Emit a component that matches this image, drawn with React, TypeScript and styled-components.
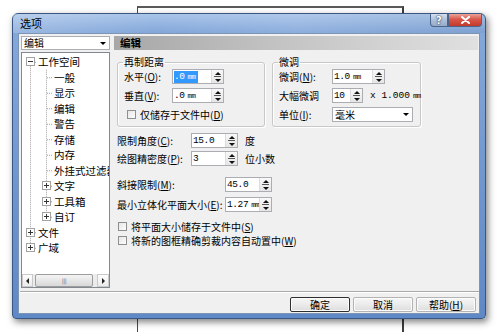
import React from 'react';
import styled, { createGlobalStyle } from 'styled-components';

type TreeItem = {
  label: string;
  root?: boolean;
  box?: 'plus' | 'minus';
};

const GlobalStyle = createGlobalStyle`
  html, body {
    margin: 0;
    padding: 0;
    background: #fff;
  }
  body {
    font-family: "Noto Sans CJK SC", "Noto Sans", sans-serif;
  }
`;

const Desktop = styled.div`
  background: #fff;
  height: 332px;
  overflow: hidden;
  position: relative;
  width: 500px;
`;

// the window lying behind the dialog
const BackWindow = styled.div`
  border-left: 1px solid #4a4a4a;
  border-right: 2px solid #3d3d3d;
  border-top: 2px solid #5a5a5a;
  box-sizing: border-box;
  height: 360px;
  left: 137px;
  position: absolute;
  top: 6px;
  width: 267px;
`;

const Dialog = styled.div`
  background: linear-gradient(180deg, #a9c4e9 0px, #84a8da 18px, #6f96cf 55%, #5f88c6 100%);
  border: 1px solid #3a5783;
  border-radius: 6px 6px 4px 4px;
  box-shadow: 2px 3px 7px rgba(0, 0, 0, 0.5);
  box-sizing: border-box;
  display: flex;
  flex-direction: column;
  height: 306px;
  left: 12px;
  position: absolute;
  top: 13px;
  width: 474px;
`;

const TitleBar = styled.div`
  align-items: center;
  background: linear-gradient(90deg, rgba(255, 255, 255, 0.18), rgba(255, 255, 255, 0) 30%, rgba(255, 255, 255, 0.08) 60%, rgba(0, 0, 0, 0.04));
  display: flex;
  flex-shrink: 0;
  height: 19px;
  padding: 0 3px 0 7px;
`;

const Title = styled.span`
  color: #000;
  flex: 1;
  font-size: 11px;
  line-height: 19px;
`;

const CaptionButtons = styled.div`
  align-self: flex-start;
  display: flex;
`;

const CaptionButton = styled.div<{ $close?: boolean }>`
  align-items: center;
  background: ${(p) =>
    p.$close
      ? 'linear-gradient(180deg, #eba397 0%, #d8574a 45%, #c23a29 100%)'
      : 'linear-gradient(180deg, #d6e0ee 0%, #adbfd9 50%, #97acca 100%)'};
  border: 1px solid #4b648a;
  border-radius: ${(p) => (p.$close ? '0 0 4px 0' : '0 0 0 4px')};
  border-top: none;
  box-sizing: border-box;
  color: #fff;
  display: flex;
  font-family: "DejaVu Sans", sans-serif;
  font-size: 10px;
  font-weight: bold;
  height: 13px;
  justify-content: center;
  text-shadow: 0 0 2px #233a5c, 0 0 1px #233a5c;
  width: ${(p) => (p.$close ? 34 : 18)}px;
`;

const Client = styled.div`
  background: #f0f0f0;
  border: 1px solid #7d94b5;
  color: #000;
  display: flex;
  flex: 1;
  flex-direction: column;
  font-size: 10px;
  margin: 0 5px 4px;
`;

const Main = styled.div`
  box-sizing: border-box;
  display: flex;
  gap: 4px;
  height: 254px;
  padding: 2px 1px 0 2px;
`;

const Sidebar = styled.div`
  display: flex;
  flex-direction: column;
  flex-shrink: 0;
  gap: 2px;
  width: 89px;
`;

const Combo = styled.div<{ $w: number }>`
  align-items: center;
  background: #fff;
  border: 1px solid #abadb3;
  box-sizing: border-box;
  display: flex;
  flex-shrink: 0;
  height: ${(p) => (p.$w > 85 ? 14 : 15)}px;
  width: ${(p) => p.$w}px;
`;

const ComboText = styled.span`
  flex: 1;
  line-height: 12px;
  padding-left: 2px;
`;

const ComboArrow = styled.span`
  align-items: center;
  display: flex;
  height: 100%;
  justify-content: center;
  width: 12px;

  &::after {
    border-left: 3px solid transparent;
    border-right: 3px solid transparent;
    border-top: 3px solid #000;
    content: '';
  }
`;

const Tree = styled.div`
  background: #fff;
  border: 1px solid #828790;
  box-sizing: border-box;
  display: flex;
  flex-direction: column;
  height: 236px;
  overflow: hidden;
`;

const TreeList = styled.div`
  flex: 1;
  overflow: hidden;
  padding-top: 1px;
  position: relative;
`;

const TreeLines = styled.svg`
  left: 0;
  position: absolute;
  top: 0;
`;

const TreeRow = styled.div<{ $indent: number }>`
  align-items: center;
  display: flex;
  font-size: 10.5px;
  height: 15.5px;
  padding-left: ${(p) => p.$indent}px;
  position: relative;
  white-space: nowrap;
`;

const ExpandBox = styled.span<{ $open?: boolean }>`
  background: #fff;
  border: 1px solid #a3a3a3;
  box-sizing: border-box;
  flex-shrink: 0;
  height: 9px;
  margin-right: 3px;
  position: relative;
  width: 9px;

  &::before {
    background: #333;
    content: '';
    height: 1px;
    left: 1px;
    position: absolute;
    top: 3px;
    width: 5px;
  }

  &::after {
    background: #333;
    content: '';
    display: ${(p) => (p.$open ? 'none' : 'block')};
    height: 5px;
    left: 3px;
    position: absolute;
    top: 1px;
    width: 1px;
  }
`;

const HScroll = styled.div`
  background: #ececec;
  display: flex;
  flex-shrink: 0;
  height: 13px;
`;

const ScrollArrow = styled.div<{ $dir: 'left' | 'right'; $w: number }>`
  align-items: center;
  background: linear-gradient(180deg, #fdfdfd, #ebebeb);
  border: 1px solid #c9c9c9;
  box-sizing: border-box;
  display: flex;
  justify-content: center;
  width: ${(p) => p.$w}px;

  &::after {
    border-bottom: 3px solid transparent;
    border-top: 3px solid transparent;
    ${(p) => (p.$dir === 'left' ? 'border-right: 3px solid #222;' : 'border-left: 3px solid #222;')}
    content: '';
  }
`;

const ScrollTrack = styled.div`
  align-items: stretch;
  display: flex;
  flex: 1;
  padding: 0 2px;
`;

const ScrollThumb = styled.div`
  align-items: center;
  background: linear-gradient(180deg, #f4f4f4, #d9d9d9);
  border: 1px solid #9d9d9d;
  border-radius: 2px;
  box-sizing: border-box;
  color: #777;
  display: flex;
  font-family: "DejaVu Sans", sans-serif;
  font-size: 6px;
  justify-content: center;
  letter-spacing: -0.5px;
  width: 58px;
`;

const Panel = styled.div`
  display: flex;
  flex: 1;
  flex-direction: column;
`;

const PanelHeader = styled.div`
  background: linear-gradient(90deg, #a7a7a7 0%, #c3c3c3 45%, #e0e0e0 100%);
  font-size: 10.5px;
  font-weight: bold;
  height: 14px;
  line-height: 14px;
  padding-left: 6px;
`;

const PanelBody = styled.div`
  display: flex;
  flex-direction: column;
  padding-left: 3px;
`;

const GroupRow = styled.div`
  display: flex;
  gap: 7px;
  margin-top: 6px;
`;

const Group = styled.fieldset<{ $w: number }>`
  border: 1px solid #c8c8c8;
  border-radius: 3px;
  box-shadow: inset 1px 1px 0 #fff, 1px 1px 0 #fff;
  box-sizing: border-box;
  display: flex;
  flex-direction: column;
  gap: 4px;
  margin: 0;
  min-width: 0;
  padding: 1px 6px 4px;
  width: ${(p) => p.$w}px;
`;

const Legend = styled.legend`
  font-size: 10px;
  line-height: 12px;
  margin-left: -1px;
  padding: 0 1px;
`;

const Section = styled.div<{ $top: number; $gap: number }>`
  display: flex;
  flex-direction: column;
  gap: ${(p) => p.$gap}px;
  margin-top: ${(p) => p.$top}px;
`;

const Row = styled.div`
  align-items: center;
  display: flex;
  height: 15px;
`;

const Label = styled.span<{ $w: number }>`
  flex-shrink: 0;
  line-height: 15px;
  white-space: nowrap;
  width: ${(p) => p.$w}px;
`;

const Suffix = styled.span`
  font-family: "Liberation Mono", monospace;
  font-size: 9.5px;
  margin-left: 7px;
  white-space: nowrap;
`;

const SuffixCjk = styled.span`
  margin-left: 7px;
  white-space: nowrap;
`;

const SpinBox = styled.div<{ $w: number }>`
  background: #fff;
  border: 1px solid #abadb3;
  box-sizing: border-box;
  display: flex;
  flex-shrink: 0;
  height: 15px;
  width: ${(p) => p.$w}px;
`;

const SpinValue = styled.div`
  align-items: center;
  display: flex;
  flex: 1;
  font-family: "Liberation Mono", monospace;
  font-size: 9.5px;
  letter-spacing: -0.4px;
  min-width: 0;
  overflow: hidden;
  padding-left: 1px;
  white-space: nowrap;
`;

const Selected = styled.span`
  background: #3399ff;
  color: #fff;
  line-height: 11px;
  padding-right: 3px;
`;

const Unit = styled.span`
  font-size: 7.5px;
  letter-spacing: -0.6px;
  margin-left: 3px;
`;

const Spinner = styled.div`
  background: linear-gradient(180deg, #f8f8f8, #e6e6e6);
  border-left: 1px solid #dcdcdc;
  display: flex;
  flex-direction: column;
  flex-shrink: 0;
  width: 11px;
`;

const SpinHalf = styled.div<{ $up?: boolean }>`
  align-items: center;
  display: flex;
  flex: 1;
  justify-content: center;
  margin: 0 2px;
  ${(p) => (p.$up ? 'border-bottom: 1px solid #555;' : '')}

  &::after {
    border-left: 3px solid transparent;
    border-right: 3px solid transparent;
    ${(p) => (p.$up ? 'border-bottom: 3px solid #111;' : 'border-top: 3px solid #111;')}
    content: '';
  }
`;

const CheckRow = styled.label<{ $indent: number }>`
  align-items: center;
  display: flex;
  gap: 4px;
  height: 14px;
  padding-left: ${(p) => p.$indent}px;
  white-space: nowrap;
`;

const CheckBox = styled.span`
  background: linear-gradient(135deg, #e6e6e6, #fdfdfd);
  border: 1px solid #8f8f8f;
  box-sizing: border-box;
  flex-shrink: 0;
  height: 9px;
  width: 9px;
`;

const Separator = styled.div`
  border-bottom: 1px solid #fff;
  border-top: 1px solid #a9a9a9;
  margin: 3px 0 0 1px;
`;

const ButtonBar = styled.div`
  display: flex;
  gap: 3px;
  justify-content: flex-end;
  padding: 4px 3px 0 0;
`;

const Button = styled.div<{ $default?: boolean }>`
  align-items: center;
  background: linear-gradient(180deg, #f6f6f6 0%, #ebebeb 50%, #dddddd 100%);
  border: 1px solid ${(p) => (p.$default ? '#2f2f2f' : '#b3b3b3')};
  border-radius: 2px;
  box-shadow: inset 0 0 0 1px #fcfcfc;
  box-sizing: border-box;
  display: flex;
  height: 15px;
  justify-content: center;
  width: 60px;
`;

const treeItems: TreeItem[] = [
  { label: '工作空间', root: true, box: 'minus' },
  { label: '一般' },
  { label: '显示' },
  { label: '编辑' },
  { label: '警告' },
  { label: '存储' },
  { label: '内存' },
  { label: '外挂式过滤器' },
  { label: '文字', box: 'plus' },
  { label: '工具箱', box: 'plus' },
  { label: '自订', box: 'plus' },
  { label: '文件', root: true, box: 'plus' },
  { label: '广域', root: true, box: 'plus' },
];

const ROW_H = 15.5;
const rowCenter = (i: number) => 1 + ROW_H * i + ROW_H / 2;

const Spin = ({ w, children }: { w: number; children: React.ReactNode }) => (
  <SpinBox $w={w}>
    <SpinValue>{children}</SpinValue>
    <Spinner>
      <SpinHalf $up />
      <SpinHalf />
    </Spinner>
  </SpinBox>
);

const Check = ({ indent, children }: { indent: number; children: React.ReactNode }) => (
  <CheckRow $indent={indent}>
    <CheckBox />
    <span>{children}</span>
  </CheckRow>
);

const WorkspaceTree = () => {
  const dot = { stroke: '#a3a3a3', strokeWidth: 1, strokeDasharray: '1 1' };
  return (
    <Tree>
      <TreeList>
        <TreeLines width="87" height="222">
          <line x1="8.5" y1={rowCenter(0)} x2="8.5" y2={rowCenter(12)} {...dot} />
          <line x1="24.5" y1={rowCenter(0) + 8} x2="24.5" y2={rowCenter(10)} {...dot} />
          {treeItems.map((item, i) =>
            item.root ? (
              <line key={i} x1="9" y1={rowCenter(i) + 0.5} x2="15" y2={rowCenter(i) + 0.5} {...dot} />
            ) : (
              <line key={i} x1="25" y1={rowCenter(i) + 0.5} x2="31" y2={rowCenter(i) + 0.5} {...dot} />
            )
          )}
        </TreeLines>
        {treeItems.map((item) => (
          <TreeRow key={item.label} $indent={item.box ? (item.root ? 4 : 20) : 32}>
            {item.box && <ExpandBox $open={item.box === 'minus'} />}
            {item.label}
          </TreeRow>
        ))}
      </TreeList>
      <HScroll>
        <ScrollArrow $dir="left" $w={11} />
        <ScrollTrack>
          <ScrollThumb>|||</ScrollThumb>
        </ScrollTrack>
        <ScrollArrow $dir="right" $w={12} />
      </HScroll>
    </Tree>
  );
};

export default function App() {
  return (
    <Desktop>
      <GlobalStyle />
      <BackWindow />
      <Dialog>
        <TitleBar>
          <Title>选项</Title>
          <CaptionButtons>
            <CaptionButton>?</CaptionButton>
            <CaptionButton $close>
              <svg width="9" height="8" viewBox="0 0 9 8">
                <path d="M1 1 L8 7 M8 1 L1 7" stroke="#fff" strokeWidth="2" strokeLinecap="round" />
              </svg>
            </CaptionButton>
          </CaptionButtons>
        </TitleBar>
        <Client>
          <Main>
            <Sidebar>
              <Combo $w={89}>
                <ComboText>编辑</ComboText>
                <ComboArrow />
              </Combo>
              <WorkspaceTree />
            </Sidebar>
            <Panel>
              <PanelHeader>编辑</PanelHeader>
              <PanelBody>
                <GroupRow>
                  <Group $w={148}>
                    <Legend>再制距离</Legend>
                    <Row>
                      <Label $w={48}>水平(<u>O</u>):</Label>
                      <Spin w={52}>
                        <Selected>
                          .0<Unit>mm</Unit>
                        </Selected>
                      </Spin>
                    </Row>
                    <Row>
                      <Label $w={48}>垂直(<u>V</u>):</Label>
                      <Spin w={52}>
                        .0<Unit>mm</Unit>
                      </Spin>
                    </Row>
                    <Check indent={3}>
                      仅储存于文件中(<u>D</u>)
                    </Check>
                  </Group>
                  <Group $w={149}>
                    <Legend>微调</Legend>
                    <Row>
                      <Label $w={53}>微调(<u>N</u>):</Label>
                      <Spin w={53}>
                        1.0<Unit>mm</Unit>
                      </Spin>
                    </Row>
                    <Row>
                      <Label $w={53}>大幅微调</Label>
                      <Spin w={31}>10</Spin>
                      <Suffix>
                        x 1.000<Unit>mm</Unit>
                      </Suffix>
                    </Row>
                    <Row>
                      <Label $w={53}>单位(<u>I</u>):</Label>
                      <Combo $w={81}>
                        <ComboText>毫米</ComboText>
                        <ComboArrow />
                      </Combo>
                    </Row>
                  </Group>
                </GroupRow>
                <Section $top={6} $gap={3}>
                  <Row>
                    <Label $w={74}>限制角度(<u>C</u>):</Label>
                    <Spin w={47}>15.0</Spin>
                    <SuffixCjk>度</SuffixCjk>
                  </Row>
                  <Row>
                    <Label $w={74}>绘图精密度(<u>P</u>):</Label>
                    <Spin w={47}>3</Spin>
                    <SuffixCjk>位小数</SuffixCjk>
                  </Row>
                </Section>
                <Section $top={11} $gap={5}>
                  <Row>
                    <Label $w={108}>斜接限制(<u>M</u>):</Label>
                    <Spin w={47}>45.0</Spin>
                  </Row>
                  <Row>
                    <Label $w={108}>最小立体化平面大小(<u>E</u>):</Label>
                    <Spin w={47}>
                      1.27<Unit>mm</Unit>
                    </Spin>
                  </Row>
                </Section>
                <Section $top={7} $gap={0}>
                  <Check indent={1}>
                    将平面大小储存于文件中(<u>S</u>)
                  </Check>
                  <Check indent={1}>
                    将新的图框精确剪裁内容自动置中(<u>W</u>)
                  </Check>
                </Section>
              </PanelBody>
            </Panel>
          </Main>
          <Separator />
          <ButtonBar>
            <Button $default>确定</Button>
            <Button>取消</Button>
            <Button>
              <span>
                帮助(<u>H</u>)
              </span>
            </Button>
          </ButtonBar>
        </Client>
      </Dialog>
    </Desktop>
  );
}
